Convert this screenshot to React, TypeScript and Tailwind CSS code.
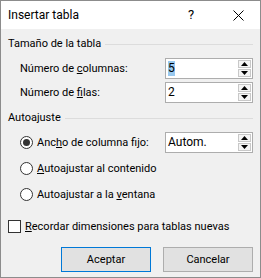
import React from "react";

const font = { fontFamily: 'Roboto, "Liberation Sans", sans-serif' };

const GroupHeader: React.FC<{ label: string }> = ({ label }) => (
  <div className="flex items-center h-[16px]">
    <span className="pr-[4px]">{label}</span>
    <div className="flex-1 h-px bg-[#dcdcdc]" />
  </div>
);

const Arrow: React.FC<{ up?: boolean }> = ({ up }) => (
  <svg width="7" height="4" viewBox="0 0 7 4">
    {up ? <path d="M0 4 L3.5 0 L7 4 Z" fill="#000" /> : <path d="M0 0 L7 0 L3.5 4 Z" fill="#000" />}
  </svg>
);

const Spinner: React.FC<{ value: string; selected?: boolean }> = ({ value, selected }) => (
  <div className="w-[88px] h-[21px] bg-white border border-[#adadad] flex items-stretch shrink-0">
    <div className="flex-1 flex items-center pl-[2px] text-[12px]">
      <span className={selected ? "bg-[#99c9ef] leading-[15px]" : "leading-[15px]"}>{value}</span>
    </div>
    <div className="w-[15px] flex flex-col gap-px p-px pr-[1px]">
      <div className="flex-1 flex items-center justify-center border border-[#c8c8c8] bg-[#f4f4f4]">
        <Arrow up />
      </div>
      <div className="flex-1 flex items-center justify-center border border-[#c8c8c8] bg-[#f4f4f4]">
        <Arrow />
      </div>
    </div>
  </div>
);

const Radio: React.FC<{ checked?: boolean }> = ({ checked }) => (
  <div className="w-[13px] h-[13px] rounded-full border border-[#333] bg-white flex items-center justify-center shrink-0">
    {checked && <div className="w-[7px] h-[7px] rounded-full bg-[#333]" />}
  </div>
);

export default function App() {
  return (
    <div
      className="w-[261px] h-[278px] border border-[#8c8c8c] flex flex-col text-[11px] leading-[16px] text-black whitespace-nowrap"
      style={font}
    >
      <div className="h-[28px] bg-white flex items-center pl-[7px] shrink-0 text-[12px]">
        <span className="flex-1">Insertar tabla</span>
        <span className="w-[30px] text-center text-[13px] mr-[27px]">?</span>
        <svg width="11" height="11" viewBox="0 0 11 11" className="mr-[16px]">
          <path d="M0.5 0.5 L10.5 10.5 M10.5 0.5 L0.5 10.5" stroke="#000" strokeWidth="1" />
        </svg>
      </div>
      <div className="flex-1 bg-[#f0f0f0] px-[7px] flex flex-col">
        <div className="mt-[7px]">
          <GroupHeader label="Tamaño de la tabla" />
        </div>
        <div className="flex items-center h-[21px] mt-[6px] pl-[12px]">
          <span className="flex-1">
            Número de <u>c</u>olumnas:
          </span>
          <Spinner value="5" selected />
        </div>
        <div className="flex items-center h-[21px] mt-[3px] pl-[12px]">
          <span className="flex-1">
            Número de <u>f</u>ilas:
          </span>
          <Spinner value="2" />
        </div>
        <div className="mt-[7px]">
          <GroupHeader label="Autoajuste" />
        </div>
        <div className="flex items-center h-[21px] mt-[6px] pl-[12px] gap-[4px]">
          <Radio checked />
          <span className="flex-1">
            Anc<u>h</u>o de columna fijo:
          </span>
          <Spinner value="Autom." />
        </div>
        <div className="flex items-center h-[21px] mt-[5px] pl-[12px] gap-[4px]">
          <Radio />
          <span>
            <u>A</u>utoajustar al contenido
          </span>
        </div>
        <div className="flex items-center h-[21px] mt-[5px] pl-[12px] gap-[4px]">
          <Radio />
          <span>
            Autoajustar a la <u>v</u>entana
          </span>
        </div>
        <div className="flex items-center h-[21px] mt-[11px] gap-[4px]">
          <div className="w-[13px] h-[13px] border border-[#333] bg-white shrink-0" />
          <span>
            <u>R</u>ecordar dimensiones para tablas nuevas
          </span>
        </div>
        <div className="flex justify-end gap-[12px] mt-[10px]">
          <button className="w-[90px] h-[25px] bg-[#e1e1e1] border border-[#0078d7]">Aceptar</button>
          <button className="w-[90px] h-[25px] bg-[#e1e1e1] border border-[#adadad]">Cancelar</button>
        </div>
      </div>
    </div>
  );
}
